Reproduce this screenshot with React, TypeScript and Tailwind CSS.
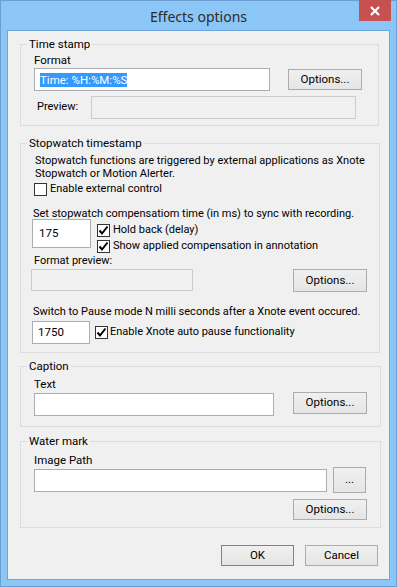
import React from 'react';

function Check({ checked = false, className = '' }: { checked?: boolean; className?: string }) {
  return (
    <span className={`flex h-[13px] w-[13px] shrink-0 items-center justify-center border border-[#333333] bg-white ${className}`}>
      {checked && (
        <svg width="11" height="11" viewBox="0 0 11 11">
          <path d="M1.5 5.5 L4 8.5 L9.5 1.5" fill="none" stroke="#000" strokeWidth="2" />
        </svg>
      )}
    </span>
  );
}

function Btn({ children, className = '', primary = false }: { children: React.ReactNode; className?: string; primary?: boolean }) {
  return (
    <div
      className={`flex shrink-0 items-center justify-center border bg-linear-to-b from-[#f0f0f0] to-[#e5e5e5] text-[11.5px] leading-none text-black ${primary ? 'border-[#3c93e0]' : 'border-[#acacac]'} ${className}`}
    >
      {children}
    </div>
  );
}

function Box({ className = '', disabled = false, children }: { className?: string; disabled?: boolean; children?: React.ReactNode }) {
  return (
    <div
      className={`flex shrink-0 items-center border text-[11.5px] ${disabled ? 'border-[#cccccc] bg-[#f0f0f0]' : 'border-[#abadb3] bg-white'} ${className}`}
    >
      {children}
    </div>
  );
}

function Group({ title, className = '', inner = '', children }: { title: string; className?: string; inner?: string; children: React.ReactNode }) {
  return (
    <fieldset className={`w-[359px] border border-[#dcdcdc] ${className}`}>
      <legend className="ml-[6px] px-[2px] text-[11.5px] leading-[16px]">{title}</legend>
      <div className={inner}>{children}</div>
    </fieldset>
  );
}

export default function App() {
  return (
    <div className="relative flex h-[587px] w-[397px] flex-col border border-[#6b9fd1] bg-[#8cc6f7] px-[6px] pb-[6px] font-['Roboto',sans-serif] text-black">
      {/* title bar */}
      <div className="flex h-[29px] items-center justify-center pt-[1px] font-['Noto_Sans',sans-serif] text-[14px] text-[#2b2b2b]">Effects options</div>
      <div className="absolute right-[5px] top-[-1px] flex h-[21px] w-[32px] items-center justify-center bg-[#c75050]">
        <svg width="10" height="10" viewBox="0 0 10 10">
          <path d="M1 1 L9 9 M9 1 L1 9" stroke="#fff" strokeWidth="2.2" />
        </svg>
      </div>

      {/* client area */}
      <div className="flex flex-1 flex-col whitespace-nowrap border border-[#6ea5dc] bg-[#f0f0f0] pl-[12px] text-[11px]">
        <Group title="Time stamp" className="mt-[5px]" inner="px-[13px] pb-[6px]">
          <div className="h-[16px] text-[11.5px] leading-[16px]">Format</div>
          <div className="flex items-start">
            <Box className="h-[23px] w-[236px] border-[#569de5] pl-[5px]">
              <span className="bg-[#3399ff] leading-[14px] text-white">Time: %H:%M:%S</span>
            </Box>
            <Btn className="ml-[18px] mt-[1px] h-[21px] w-[74px]">Options...</Btn>
          </div>
          <div className="mt-[5px] flex items-center">
            <span className="ml-[3px] w-[54px]">Preview:</span>
            <Box disabled className="h-[23px] w-[265px]" />
          </div>
        </Group>

        <Group title="Stopwatch timestamp" className="mt-[9px]" inner="px-[12px] pb-[8px]">
          <div className="ml-[2px] mt-[3px] leading-[13px]">
            Stopwatch functions are triggered by external applications as Xnote
            <br />
            Stopwatch or Motion Alerter.
          </div>
          <div className="mt-[3px] flex h-[13px] items-center">
            <Check className="ml-[1px]" />
            <span className="ml-[3px]">Enable external control</span>
          </div>
          <div className="mt-[12px] h-[12px] leading-[12px]">Set stopwatch compensatiom time (in ms) to sync with recording.</div>
          <div className="-ml-[1px] mt-[-1px] flex items-start">
            <Box className="h-[29px] w-[59px] pl-[6px]">175</Box>
            <div className="ml-[6px] mt-[5px] flex flex-col gap-[3px]">
              <div className="flex h-[13px] items-center">
                <Check checked />
                <span className="ml-[3px]">Hold back (delay)</span>
              </div>
              <div className="flex h-[13px] items-center">
                <Check checked />
                <span className="ml-[3px]">Show applied compensation in annotation</span>
              </div>
            </div>
          </div>
          <div className="ml-[1px] mt-[2px] h-[12px] leading-[12px]">Format preview:</div>
          <div className="-ml-[2px] mt-[2px] flex items-start">
            <Box disabled className="h-[22px] w-[162px]" />
            <Btn className="ml-[100px] h-[23px] w-[74px]">Options...</Btn>
          </div>
          <div className="mt-[14px] h-[12px] leading-[12px]">Switch to Pause mode N milli seconds after a Xnote event occured.</div>
          <div className="-ml-[1px] mt-[3px] flex items-center">
            <Box className="h-[23px] w-[58px] pl-[5px]">1750</Box>
            <Check checked className="ml-[5px]" />
            <span className="ml-[2px]">Enable Xnote auto pause functionality</span>
          </div>
        </Group>

        <Group title="Caption" className="mt-[5px]" inner="px-[13px] pb-[10px]">
          <div className="mt-[4px] h-[12px] text-[11.5px] leading-[12px]">Text</div>
          <div className="mt-[2px] flex items-start">
            <Box className="mt-[1px] h-[23px] w-[240px]" />
            <Btn className="ml-[19px] h-[22px] w-[74px]">Options...</Btn>
          </div>
        </Group>

        <Group title="Water mark" className="mt-[6px]" inner="px-[13px] pb-[7px]">
          <div className="mt-[5px] h-[12px] text-[11.5px] leading-[12px]">Image Path</div>
          <div className="mt-[1px] flex items-start">
            <Box className="mt-[2px] h-[23px] w-[293px]" />
            <Btn className="ml-[6px] h-[26px] w-[33px]">...</Btn>
          </div>
          <div className="mt-[6px] flex">
            <Btn className="ml-[259px] h-[21px] w-[74px]">Options...</Btn>
          </div>
        </Group>

        <div className="mt-[17px] flex">
          <Btn primary className="ml-[201px] h-[21px] w-[73px]">OK</Btn>
          <Btn className="ml-[11px] h-[21px] w-[73px]">Cancel</Btn>
        </div>
      </div>
    </div>
  );
}
